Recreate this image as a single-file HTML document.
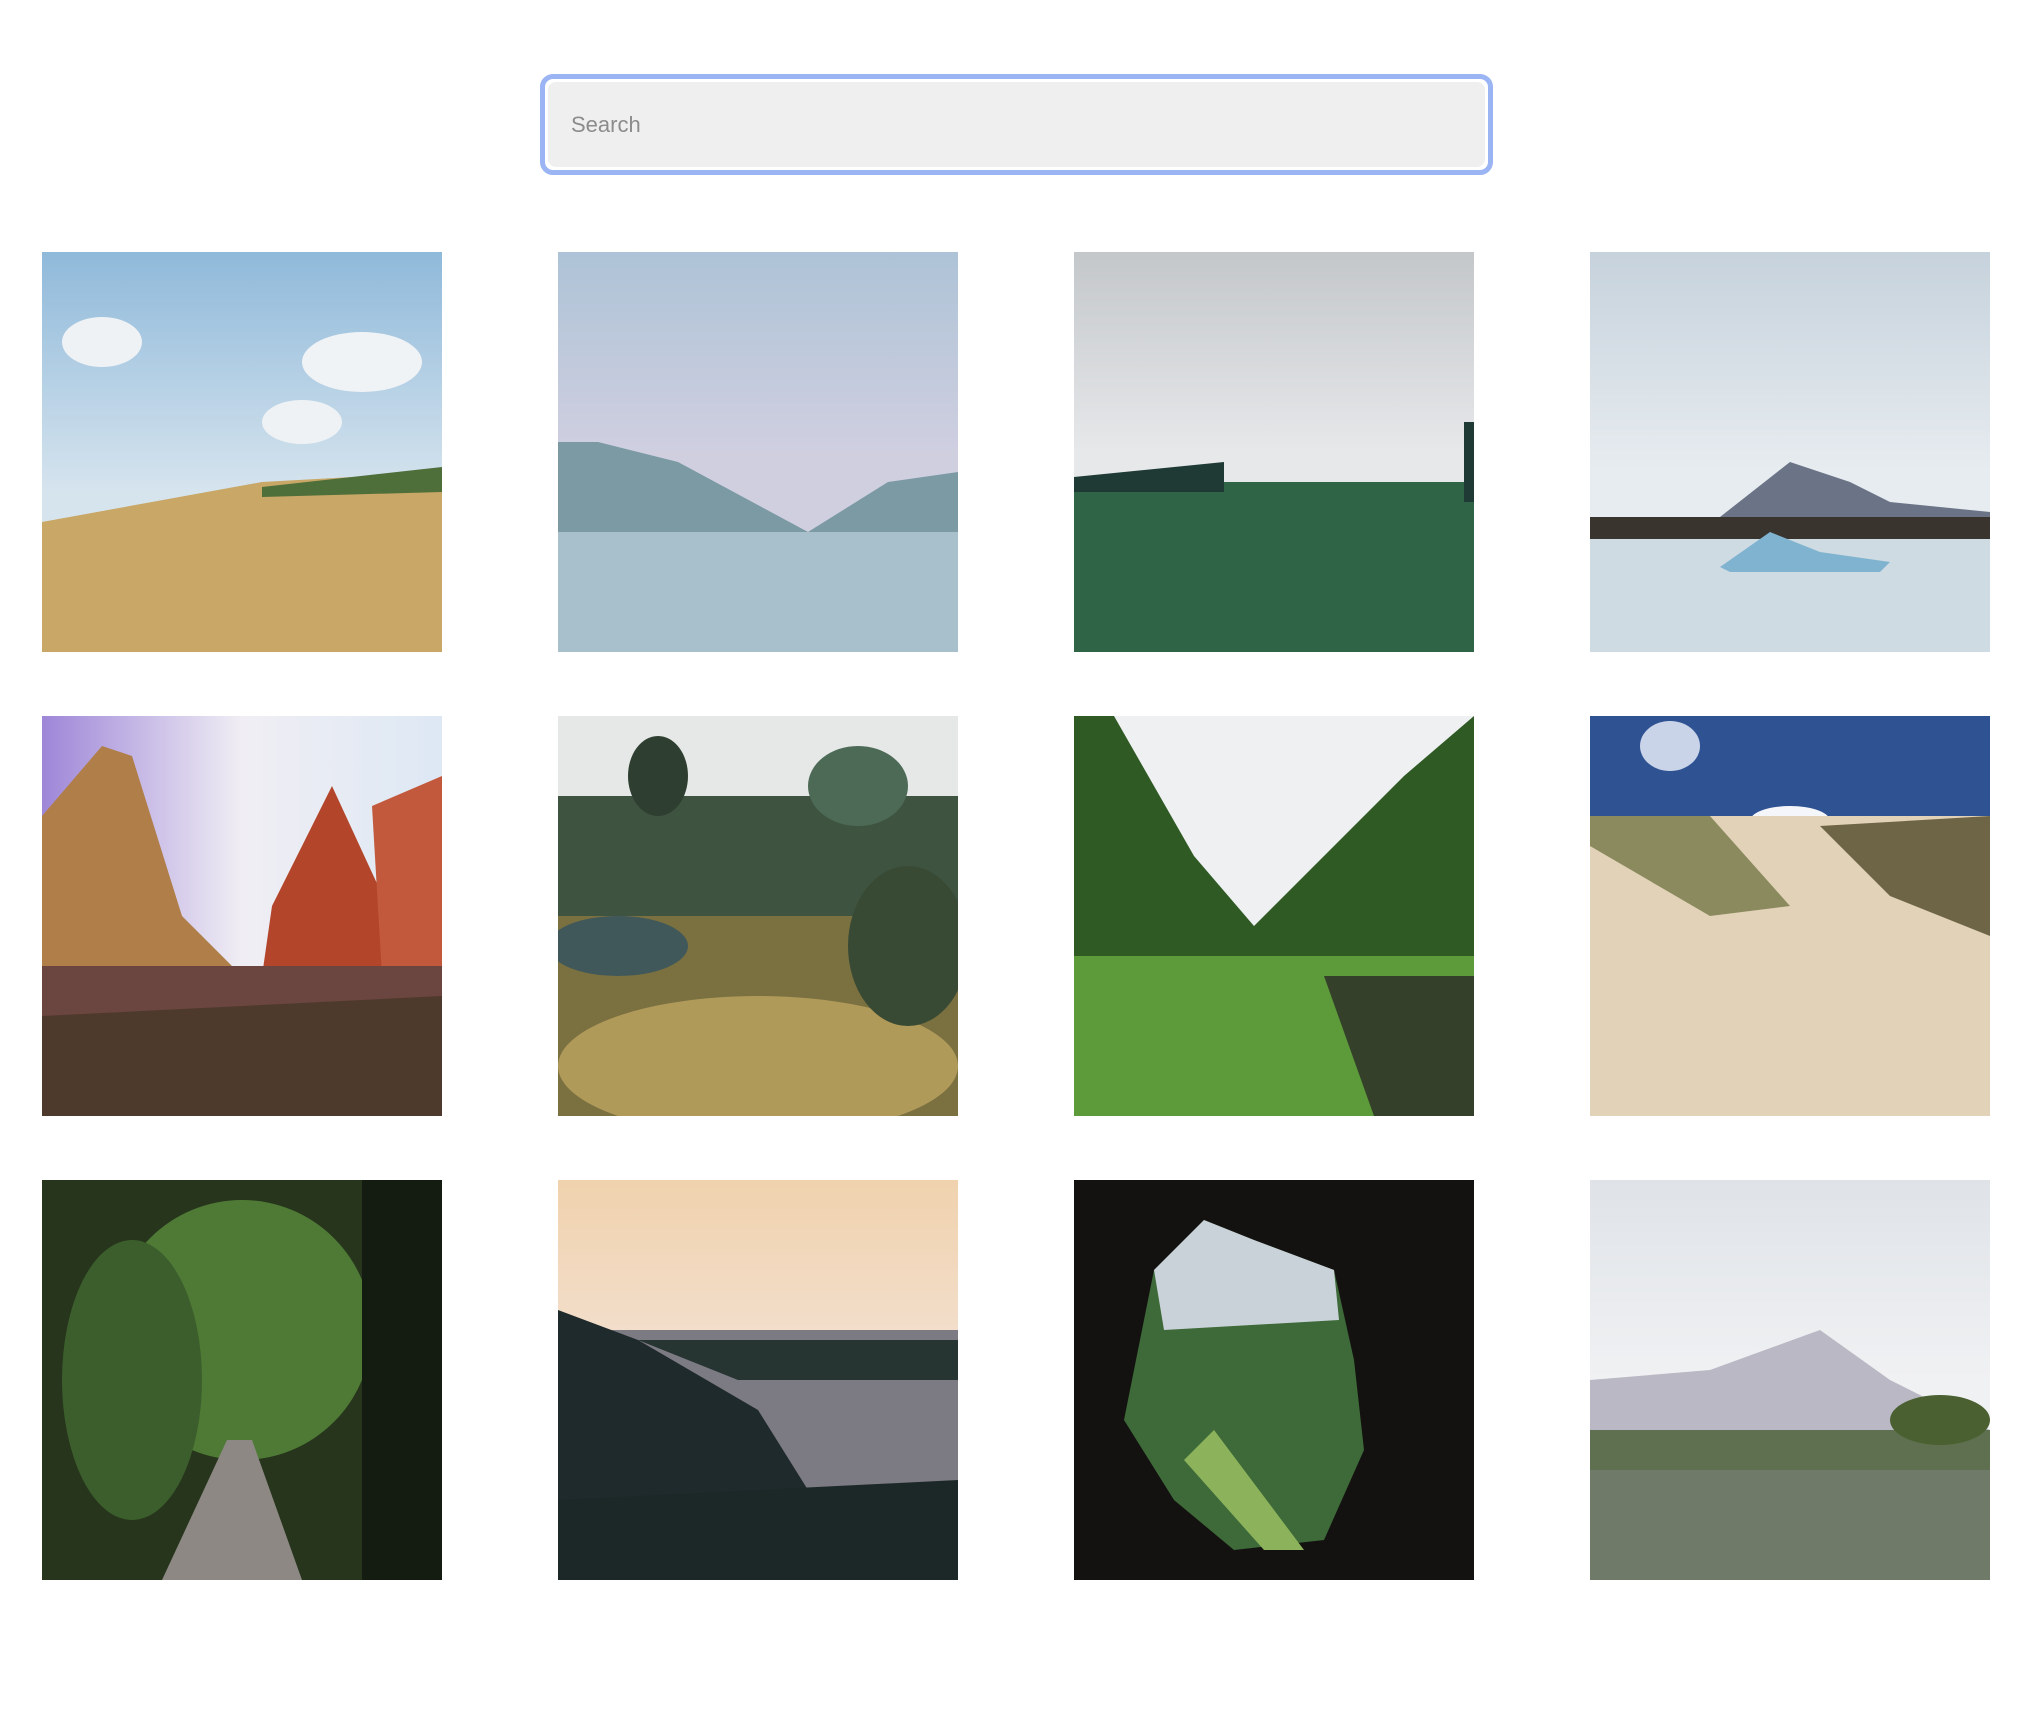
<!DOCTYPE html>
<html><head><meta charset="utf-8"><style>
html,body{margin:0;padding:0;background:#fff;width:2020px;height:1716px;overflow:hidden;font-family:"Liberation Sans",sans-serif}
.search{position:absolute;left:540px;top:74px;width:953px;height:101px;box-sizing:border-box;border:5px solid #9ab4f4;border-radius:13px;background:#fff;padding:3px}
.search div{width:100%;height:100%;background:#efefef;border-radius:8px;box-sizing:border-box;padding-left:23px;line-height:85px;font-size:22px;color:#8c8c8c}
.t{position:absolute;width:400px;height:400px;overflow:hidden}
.t svg{display:block}
</style></head><body>
<div class="search"><div>Search</div></div>

<div class="t" style="left:42px;top:252px"><svg width="400" height="400"><defs><linearGradient id="a1" x1="0" y1="0" x2="0" y2="1"><stop offset="0" stop-color="#8fb9da"/><stop offset=".6" stop-color="#d6e4ee"/></linearGradient></defs><rect width="400" height="400" fill="url(#a1)"/><ellipse cx="60" cy="90" rx="40" ry="25" fill="#eef2f5"/><ellipse cx="320" cy="110" rx="60" ry="30" fill="#f0f3f6"/><ellipse cx="260" cy="170" rx="40" ry="22" fill="#eef2f5"/><polygon points="0,270 220,230 400,220 400,400 0,400" fill="#c9a766"/><polygon points="220,235 400,215 400,240 220,245" fill="#4e6e3a"/></svg></div>
<div class="t" style="left:558px;top:252px"><svg width="400" height="400"><defs><linearGradient id="a2" x1="0" y1="0" x2="0" y2="1"><stop offset="0" stop-color="#aec3d7"/><stop offset=".5" stop-color="#cfcfe0"/></linearGradient></defs><rect width="400" height="400" fill="url(#a2)"/><polygon points="0,190 40,190 120,210 250,280 330,230 400,220 400,280 0,280" fill="#7c9aa3"/><rect y="280" width="400" height="120" fill="#a8c0cc"/></svg></div>
<div class="t" style="left:1074px;top:252px"><svg width="400" height="400"><defs><linearGradient id="a3" x1="0" y1="0" x2="0" y2="1"><stop offset="0" stop-color="#c4c7ca"/><stop offset=".5" stop-color="#e6e8ea"/></linearGradient></defs><rect width="400" height="400" fill="url(#a3)"/><rect y="230" width="400" height="170" fill="#2f6447"/><polygon points="0,225 150,210 150,240 0,240" fill="#1f3a35"/><rect x="390" y="170" width="10" height="80" fill="#1f3a35"/></svg></div>
<div class="t" style="left:1590px;top:252px"><svg width="400" height="400"><defs><linearGradient id="a4" x1="0" y1="0" x2="0" y2="1"><stop offset="0" stop-color="#c6d2dc"/><stop offset=".55" stop-color="#e7ecf0"/></linearGradient></defs><rect width="400" height="400" fill="url(#a4)"/><polygon points="130,265 200,210 260,230 300,250 400,260 400,270 130,270" fill="#6b7486"/><rect y="265" width="400" height="22" fill="#3a342e"/><rect y="287" width="400" height="113" fill="#cfdbe2"/><polygon points="130,315 180,280 230,300 300,310 290,320 140,320" fill="#7fb3cf"/></svg></div>

<div class="t" style="left:42px;top:716px"><svg width="400" height="400"><defs><linearGradient id="b1" x1="0" y1="0" x2="1" y2="0"><stop offset="0" stop-color="#9e86d8"/><stop offset=".5" stop-color="#f0eef4"/><stop offset="1" stop-color="#dde8f4"/></linearGradient></defs><rect width="400" height="400" fill="url(#b1)"/><polygon points="0,100 60,30 90,40 140,200 200,260 0,260" fill="#b07e48"/><polygon points="230,190 290,70 350,200 340,260 220,260" fill="#b2452a"/><polygon points="330,90 400,60 400,260 340,260" fill="#c2583c"/><rect y="250" width="400" height="150" fill="#6b4540"/><polygon points="0,300 400,280 400,400 0,400" fill="#4e3a2c"/></svg></div>
<div class="t" style="left:558px;top:716px"><svg width="400" height="400"><rect width="400" height="400" fill="#e6e8e8"/><rect y="80" width="400" height="170" fill="#3e5440"/><ellipse cx="100" cy="60" rx="30" ry="40" fill="#2e3e30"/><ellipse cx="300" cy="70" rx="50" ry="40" fill="#4c6a56"/><rect y="200" width="400" height="200" fill="#7a7040"/><ellipse cx="200" cy="350" rx="200" ry="70" fill="#b09a5a"/><ellipse cx="60" cy="230" rx="70" ry="30" fill="#40585a"/><ellipse cx="350" cy="230" rx="60" ry="80" fill="#394a34"/></svg></div>
<div class="t" style="left:1074px;top:716px"><svg width="400" height="400"><rect width="400" height="400" fill="#eef0f2"/><polygon points="0,0 40,0 120,140 180,210 240,150 330,60 400,0 400,400 0,400" fill="#2f5a24"/><rect y="240" width="400" height="160" fill="#5d9a3a"/><polygon points="250,260 400,260 400,400 300,400" fill="#34402a"/></svg></div>
<div class="t" style="left:1590px;top:716px"><svg width="400" height="400"><rect width="400" height="130" fill="#2f5392"/><ellipse cx="80" cy="30" rx="30" ry="25" fill="#c9d4e8"/><ellipse cx="200" cy="105" rx="40" ry="15" fill="#f4f6fa"/><rect y="100" width="400" height="300" fill="#e2d3b8"/><polygon points="0,100 120,100 200,190 120,200 0,130" fill="#8b8a5e"/><polygon points="230,110 400,100 400,220 300,180" fill="#6e6446"/></svg></div>

<div class="t" style="left:42px;top:1180px"><svg width="400" height="400"><rect width="400" height="400" fill="#26351c"/><ellipse cx="200" cy="150" rx="130" ry="130" fill="#4f7a36"/><ellipse cx="90" cy="200" rx="70" ry="140" fill="#3c5e2c"/><rect x="320" width="80" height="400" fill="#141b10"/><polygon points="185,260 210,260 260,400 120,400" fill="#8d8884"/></svg></div>
<div class="t" style="left:558px;top:1180px"><svg width="400" height="400"><defs><linearGradient id="c2" x1="0" y1="0" x2="0" y2="1"><stop offset="0" stop-color="#f0d2ad"/><stop offset=".45" stop-color="#f3e0d0"/></linearGradient></defs><rect width="400" height="400" fill="url(#c2)"/><rect y="150" width="400" height="250" fill="#7c7a82"/><polygon points="0,130 80,160 200,230 250,310 0,330" fill="#1f2a2c"/><polygon points="80,160 400,160 400,200 180,200" fill="#263432"/><polygon points="0,320 400,300 400,400 0,400" fill="#1c2828"/></svg></div>
<div class="t" style="left:1074px;top:1180px"><svg width="400" height="400"><rect width="400" height="400" fill="#141210"/><path d="M80 90 L130 40 L180 60 L260 90 L280 180 L290 270 L250 360 L160 370 L100 320 L50 240 Z" fill="#3d6a38"/><path d="M80 90 L130 40 L180 60 L260 90 L265 140 L90 150 Z" fill="#c9d2d8"/><path d="M140 250 L230 370 L190 370 L110 280Z" fill="#8cb35c"/></svg></div>
<div class="t" style="left:1590px;top:1180px"><svg width="400" height="400"><defs><linearGradient id="c4" x1="0" y1="0" x2="0" y2="1"><stop offset="0" stop-color="#dfe3e8"/><stop offset=".5" stop-color="#f0f1f3"/></linearGradient></defs><rect width="400" height="400" fill="url(#c4)"/><polygon points="0,200 120,190 230,150 300,200 400,250 0,260" fill="#b9b8c4"/><rect y="250" width="400" height="150" fill="#5f7050"/><rect y="290" width="400" height="110" fill="#6f7a68"/><ellipse cx="350" cy="240" rx="50" ry="25" fill="#4a6030"/></svg></div>
</body></html>
